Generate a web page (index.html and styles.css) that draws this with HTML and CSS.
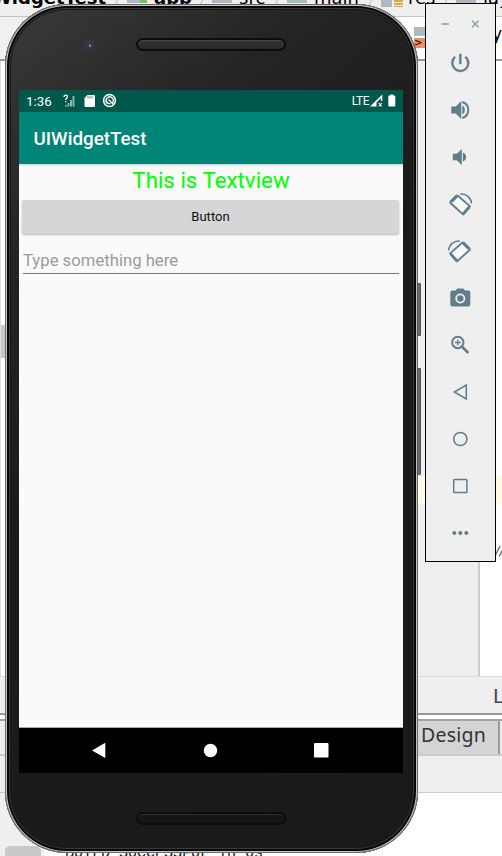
FILE: index.html
```html
<!DOCTYPE html>
<html lang="en">
<head>
<meta charset="utf-8">
<title>UIWidgetTest</title>
<link rel="stylesheet" href="styles.css">
</head>
<body>
<main class="desktop">
  <section class="ide">
    <header class="crumbs">
      <span class="crumb project"><b>UIWidgetTest</b></span>
      <span class="crumb app"><i class="folder module"></i><b>app</b></span>
      <span class="crumb src"><i class="folder"></i>src</span>
      <span class="crumb main"><i class="folder"></i>main</span>
      <span class="crumb res"><i class="folder lines"></i>res</span>
      <span class="crumb layout"><i class="folder"></i>layout</span>
    </header>
    <div class="filetabs"><i class="filetype">&gt;</i><span>y_</span></div>
    <div class="editor">
      <div class="rail"><i></i></div>
      <div class="gutter"></div>
      <div class="code"><span>//</span></div>
    </div>
    <div class="crumbfoot"><span>L</span></div>
    <div class="modes"><span>Design</span></div>
    <div class="strip"></div>
    <footer class="console"><i class="tool"></i><span>BUILD SUCCESSFUL in 6s</span></footer>
  </section>

  <section class="phone">
    <i class="side power"></i><i class="side volume"></i>
    <div class="forehead"><i class="camera"></i><i class="speaker"></i></div>
    <div class="screen">
      <div class="status">
        <span class="time">1:36</span>
        <svg class="left-icons" width="56" height="15" viewBox="0 0 56 15">
          <path d="M2 13.500V12h2v1.500zm2.500 0V10h2v3.500zm2.500 0V7h2v6.500zm2.500 0V3h2v10.500z" fill="#8ab3aa"/>
          <path d="M1 4c0-2.700 3.600-2.500 3.400-.2C4.300 5.300 2.700 5.300 2.700 7M2.700 8v1.300" fill="none" stroke="#fff" stroke-width="1.300"/>
          <path d="M24.500 2H31q1 0 1 1v10q0 1-1 1h-8.500q-1 0-1-1V5z" fill="#fff"/>
          <path d="M25 3.300v2m2-2v2m2-2v2" stroke="#00574b" stroke-width=".8"/>
          <circle cx="46.500" cy="7.500" r="5.900" fill="none" stroke="#fff" stroke-width="1.500"/>
          <path d="M44 10a3.600 3.600 0 1 1 5.700-.5M45.500 6.500l5 5M43.500 8.500c.5 1.600 2 2.500 4 1.900" fill="none" stroke="#fff" stroke-width="1.400"/>
        </svg>
        <span class="lte">LTE</span>
        <svg class="right-icons" width="28" height="15" viewBox="0 0 28 15">
          <path fill-rule="evenodd" d="M0 13.500 12.300 1.500V8h-1.500V5.200L6.500 9.500v4z" fill="#fff"/>
          <path d="m8.700 10 3 3.400m0-3.400-3 3.400" stroke="#fff" stroke-width="1.100"/>
          <path d="M20.300 2.500V1.500h3v1h1q1 0 1 1V12.500q0 1-1 1H19.300q-1 0-1-1v-9q0-1 1-1z" fill="#fff"/>
        </svg>
      </div>
      <div class="appbar">UIWidgetTest</div>
      <div class="content">
        <div class="textview">This is Textview</div>
        <div class="button">Button</div>
        <div class="input">Type something here</div>
      </div>
      <div class="nav">
        <svg width="384" height="45" viewBox="0 0 384 45">
          <path d="M73 22.500 86.300 14.700V30z" fill="#fff"/>
          <circle cx="191.500" cy="22.500" r="6.700" fill="#fff"/>
          <rect x="295" y="15" width="14.500" height="14.500" rx="1" fill="#fff"/>
        </svg>
      </div>
    </div>
    <div class="chin"><i class="speaker"></i></div>
  </section>

  <aside class="toolbar">
    <div class="window-controls">
      <svg width="70" height="36" viewBox="0 0 70 36" fill="none" stroke="#8a9aa2">
        <path d="M15.500 20h7.500" stroke-width="1.500"/><path d="m46 16.800 6.500 6.500m0-6.500-6.500 6.500" stroke-width="1.400"/>
      </svg>
    </div>
    <svg class="tool-icon" viewBox="0 0 24 24"><path d="M13 3h-2v10h2zm4.830 2.170-1.420 1.420A6.920 6.920 0 0 1 19 12a7 7 0 1 1-11.420-5.420L6.170 5.170A8.930 8.930 0 0 0 3 12a9 9 0 1 0 18 0c0-2.740-1.230-5.180-3.170-6.830z" stroke="#607d8b" stroke-width=".4"/></svg>
    <svg class="tool-icon" viewBox="0 0 24 24"><path d="M3 8.500v7h4.500L13 21V3L7.500 8.500zM14 7.500v9c3.400-1.500 3.400-7.500 0-9zM14 3v2.300c6.700 1.300 6.700 12.100 0 13.400V21c9.300-1.600 9.300-16.400 0-18z"/></svg>
    <svg class="tool-icon" viewBox="0 0 24 24"><path d="M4.500 8.700v6.600h4l5 5V4l-5 4.700zm10-1.200v9c4.500-1.500 4.500-7.500 0-9z"/></svg>
    <svg class="tool-icon rotate" viewBox="0 0 24 24"><g id="rotate"><path d="M2.200 9.500 8 3.700Q8.800 3 9.600 3.700L21.700 14.400 14.900 22.500 2.200 11Q1.500 10.300 2.200 9.500z" fill="#f8fbfc" stroke="#607d8b" stroke-width="1.800" stroke-linejoin="round"/><path d="m3 9.700 5.800-5.700M15 21.700l6-6.700" fill="none" stroke="#607d8b" stroke-width="2.800"/><path d="M12 2c6-.7 10.700 3.800 11.300 9.500" fill="none" stroke="#607d8b" stroke-width="1.500"/></g></svg>
    <svg class="tool-icon rotate" viewBox="0 0 24 24"><use href="#rotate" transform="translate(23.500 0) scale(-1 1)"/></svg>
    <svg class="tool-icon" viewBox="0 0 24 24"><circle cx="12" cy="12.500" r="3.200"/><path d="M9 2.500 7.200 4.500H4a2 2 0 0 0-2 2v12a2 2 0 0 0 2 2h16a2 2 0 0 0 2-2v-12a2 2 0 0 0-2-2h-3.200L15 2.500zm3 5a5 5 0 1 1 0 10 5 5 0 0 1 0-10z" fill-rule="evenodd"/></svg>
    <svg class="tool-icon" viewBox="0 0 24 24"><g fill="none" stroke="#607d8b"><circle cx="9.500" cy="9.500" r="5.700" stroke-width="1.900"/><path d="m14 14 6 6" stroke-width="2.500"/><path d="M6.500 9.500h6m-3-3v6" stroke-width="1.300"/></g></svg>
    <svg class="tool-icon line" viewBox="0 0 24 24"><path d="M18 5v14L6 12z"/></svg>
    <svg class="tool-icon line" viewBox="0 0 24 24"><circle cx="12" cy="12" r="6.600"/></svg>
    <svg class="tool-icon line" viewBox="0 0 24 24"><rect x="5.400" y="5.400" width="13.200" height="13.200" rx=".8"/></svg>
    <svg class="tool-icon" viewBox="0 0 24 24"><circle cx="6" cy="12" r="2"/><circle cx="12" cy="12" r="2"/><circle cx="18" cy="12" r="2"/></svg>
  </aside>
</main>
</body>
</html>
```
FILE: styles.css
```css
* { box-sizing: border-box; }
body { margin: 0; font-family: Roboto, sans-serif; }
i { font-style: normal; }
.desktop { position: relative; width: 502px; height: 856px; overflow: hidden; background: #fff; }

/* IDE behind the emulator */
.ide { display: flex; flex-direction: column; height: 856px; font-family: "DejaVu Sans", sans-serif; color: #444; }
.crumbs { display: flex; height: 17px; background: #efefef; border-bottom: 1px solid #c4c4c4; font-size: 18px; line-height: 20px; color: #000; overflow: hidden; }
.crumb { display: flex; flex: none; height: 20px; margin-top: -12px; white-space: nowrap; }
.crumb:not(:last-child)::after { content: ""; width: 1px; height: 12px; margin: 6px 9px 0 auto; background: #bbb; transform: skewX(-25deg); }
.project { width: 127px; justify-content: flex-end; }
.project b { margin-left: -40px; }
.project.crumb::after { margin-left: 11px; }
.app { width: 85px; }
.src { width: 75px; }
.main { width: 94px; }
.res { width: 75px; }
.layout { width: 80px; }
.folder { flex: none; width: 20px; height: 6px; margin: 9px 7px 0 0; background: #aeb8bf; }
.module { border-right: 7px solid #76c35b; }
.lines { width: 22px; height: 10px; margin: 9px 5px 0 0; background: linear-gradient(90deg, #aeb8bf 11px, #efefef 11px 13px, transparent 13px), repeating-linear-gradient(#dca850 0 2px, #efefef 2px 3px); }
.filetabs { display: flex; justify-content: space-between; height: 44px; background: linear-gradient(90deg, #f0f0f0 100px, #fff 100px); border-bottom: 2px solid #999; font-size: 17px; color: #000; padding-left: 414px; }
.filetype { width: 14px; height: 21px; margin-top: 10px; padding-top: 10px; background: linear-gradient(#aeb8bf 9px, #fff 9px 11px, #f28b5b 11px); font-size: 10px; line-height: 12px; }
.filetabs span { width: 12px; margin-top: 7px; direction: rtl; overflow: hidden; }
.editor { display: flex; height: 615px; }
.rail { width: 6px; border-left: 1px solid #ddd; border-right: 1px solid #8b9298; background: #fff; padding-top: 264px; }
.rail i { display: block; height: 33px; background: #c8c8c8; }
.gutter, .code { background: linear-gradient(transparent 415px, #fffae3 415px, #fffae3 443px, transparent 443px); }
.gutter { width: 474px; border-right: 2px solid #ccc; background-color: #efefef; }
.code { flex: 1; padding: 482px 0 0 15px; overflow: hidden; font-size: 13px; font-style: italic; }
.crumbfoot { height: 39px; padding: 7px 0 0 493px; overflow: hidden; background: #efefef; border-top: 1px solid #ddd; border-bottom: 2px solid #999; font-size: 19px; line-height: 24px; }
.crumbfoot span { display: block; }
.modes { height: 37px; margin-top: 4px; padding-left: 400px; border-top: 2px solid #a2a2a2; border-bottom: 2px solid #ccc; background: #eee; }
.modes span { display: block; width: 100px; height: 33px; padding-left: 21px; border-right: 2px solid #999; background: #d4d4d4; font: 19.500px/28px "Noto Sans", sans-serif; letter-spacing: .250px; color: #333; }
.strip { height: 37px; background: #eee; border-bottom: 1px solid #ccc; }
.modes, .crumbfoot, .strip { flex: none; }
.console { display: flex; flex: 1; background: linear-gradient(90deg, #efefef 44px, #fff 44px); overflow: hidden; }
.tool { flex: none; width: 36px; height: 18px; margin: 53px 24px 0 5px; border-radius: 5px; background: #c8c8c8; }
.console span { margin-top: 53px; white-space: nowrap; font: 15px/16px "Liberation Mono", monospace; color: #111; }

/* emulated phone */
.phone { position: absolute; left: 5px; top: 4px; width: 413px; height: 849px; padding: 0 0 0 14px; border-radius: 62px; background: linear-gradient(140deg, #3a3a3a, #242424 22%, #1b1b1b 45%, #1a1a1a); box-shadow: inset 0 0 0 1px #6a6a6a, inset 0 0 0 2px #c4c4c4, inset 0 0 0 4px #080808, inset 0 0 0 5px #393939, inset 0 0 0 6px #171717; }
.side { position: absolute; left: 412px; width: 4px; background: #6f6a6a; border: 1px solid #555; border-radius: 0 1px 1px 0; }
.power { top: 279px; height: 53px; }
.volume { top: 364px; height: 107px; }
.forehead { display: flex; height: 86px; }
.camera { width: 12px; height: 12px; margin: 34px 0 0 63px; border-radius: 50%; background: radial-gradient(circle at 66% 64%, #8a7f92 0 8%, #3b3542 15% 40%, #303030 70%); }
.speaker { display: block; width: 150px; height: 13px; border: 2px solid #0c0c0c; border-radius: 7px; background: linear-gradient(#343434, #282828); box-shadow: inset 0 1px #444; }
.forehead .speaker { margin: 34px 0 0 42px; }
.chin .speaker { margin: 39px 0 0 117px; background: #161616; box-shadow: inset 0 1px #303030; }
.screen { display: flex; flex-direction: column; width: 384px; height: 683px; background: #fafafa; }
.status { display: flex; height: 22px; padding: 4px 7px 0 7px; background: #00574b; color: #fff; font-size: 13.300px; line-height: 15px; }
.time { width: 37px; }
.left-icons { margin-top: -1px; }
.lte { margin-left: auto; margin-right: 1px; font-size: 12px; letter-spacing: -.5px; }
.right-icons { margin: -1px -2px 0 0; }
.status svg { flex: none; }
.appbar { height: 52px; padding-left: 14.500px; background: #008577; color: #fff; font-size: 18.800px; font-weight: 500; line-height: 54px; box-shadow: 0 1px 2px #0003; z-index: 1; }
.content { flex: 1; border-bottom: 1px solid #aaa; }
.textview { height: 36px; text-align: center; color: #0f0; font-size: 22.300px; line-height: 32px; }
.button { width: 377px; height: 34px; margin-left: 3px; border-radius: 2px; background: #d6d6d6; color: #111; font-size: 13.100px; font-weight: 400; line-height: 34px; text-align: center; box-shadow: 0 1px 2px #0004; }
.input { width: 376px; height: 28px; margin: 12px 0 0 4px; border-bottom: 1px solid #777; color: #9a9a9a; font-size: 16.700px; line-height: 29px; }
.nav { height: 45px; background: #000; }
.nav svg { display: block; }

/* emulator controls */
.toolbar { position: absolute; left: 425px; top: 3px; display: flex; flex-direction: column; align-items: center; gap: 23px; width: 71px; height: 559px; border: 1px solid #000; background: #efefef; }
.window-controls { height: 36px; margin-bottom: -12px; }
.tool-icon { width: 24px; height: 24px; flex: none; fill: #607d8b; overflow: visible; transform: translateX(-.700px); }
.line { fill: none; stroke: #607d8b; stroke-width: 1.500px; }
```
